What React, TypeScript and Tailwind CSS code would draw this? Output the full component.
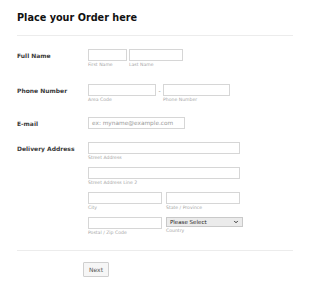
import { ChevronDown } from "lucide-react";

function Field({ w, h = "h-[12px]" }: { w: string; h?: string }) {
  return <div className={`${w} ${h} border border-[#d6d6d6] bg-white`} />;
}

function Sub({ children }: { children: React.ReactNode }) {
  return <div className="mt-[1px] text-[4.6px] leading-[5px] text-[#a6a6a6] whitespace-nowrap">{children}</div>;
}

function Label({ children }: { children: React.ReactNode }) {
  return (
    <div className="w-[71px] h-[12px] flex items-center text-[6px] font-bold text-[#3a3a3a] whitespace-nowrap">
      {children}
    </div>
  );
}

export default function App() {
  return (
    <div className="w-[310px] h-[289px] bg-white px-[17px] font-['DejaVu_Sans',sans-serif] overflow-hidden">
      <h1 className="pt-[12px] text-[9.7px] leading-[12px] font-bold text-[#111]">Place your Order here</h1>
      <div className="mt-[11px] h-px bg-[#ececec]" />

      {/* full name */}
      <div className="flex mt-[13px]">
        <Label>Full Name</Label>
        <div className="flex gap-[2px]">
          <div>
            <Field w="w-[39px]" />
            <Sub>First Name</Sub>
          </div>
          <div>
            <Field w="w-[54px]" />
            <Sub>Last Name</Sub>
          </div>
        </div>
      </div>

      {/* phone */}
      <div className="flex mt-[17px]">
        <Label>Phone Number</Label>
        <div className="flex">
          <div>
            <Field w="w-[68px]" />
            <Sub>Area Code</Sub>
          </div>
          <div className="w-[7px] h-[12px] flex items-center justify-center text-[6px] text-[#888]">-</div>
          <div>
            <Field w="w-[67px]" />
            <Sub>Phone Number</Sub>
          </div>
        </div>
      </div>

      {/* email */}
      <div className="flex mt-[15px]">
        <Label>E-mail</Label>
        <div className="w-[97px] h-[12px] border border-[#d6d6d6] flex items-center pl-[3px] text-[5.8px] text-[#9a9a9a] whitespace-nowrap">
          ex: myname@example.com
        </div>
      </div>

      {/* address */}
      <div className="flex mt-[13px]">
        <Label>Delivery Address</Label>
        <div>
          <Field w="w-[152px]" />
          <Sub>Street Address</Sub>
          <div className="mt-[7px]">
            <Field w="w-[152px]" />
            <Sub>Street Address Line 2</Sub>
          </div>
          <div className="flex gap-[4px] mt-[7px]">
            <div>
              <Field w="w-[74px]" />
              <Sub>City</Sub>
            </div>
            <div>
              <Field w="w-[74px]" />
              <Sub>State / Province</Sub>
            </div>
          </div>
          <div className="flex gap-[4px] mt-[7px]">
            <div>
              <Field w="w-[74px]" />
              <Sub>Postal / Zip Code</Sub>
            </div>
            <div>
              <div className="w-[77px] h-[10px] border border-[#c9c9c9] bg-[#ebebeb] flex items-center justify-between pl-[3px] pr-[3px]">
                <span className="text-[5.5px] text-[#222] whitespace-nowrap">Please Select</span>
                <ChevronDown size={6} strokeWidth={4} className="text-[#333]" />
              </div>
              <Sub>Country</Sub>
            </div>
          </div>
        </div>
      </div>

      <div className="mt-[15px] h-px bg-[#ececec]" />

      <button className="ml-[66px] mt-[11px] w-[26px] h-[15px] border border-[#cfcfcf] bg-[#f6f6f6] rounded-[1px] text-[6px] text-[#555] flex items-center justify-center">
        Next
      </button>
    </div>
  );
}
